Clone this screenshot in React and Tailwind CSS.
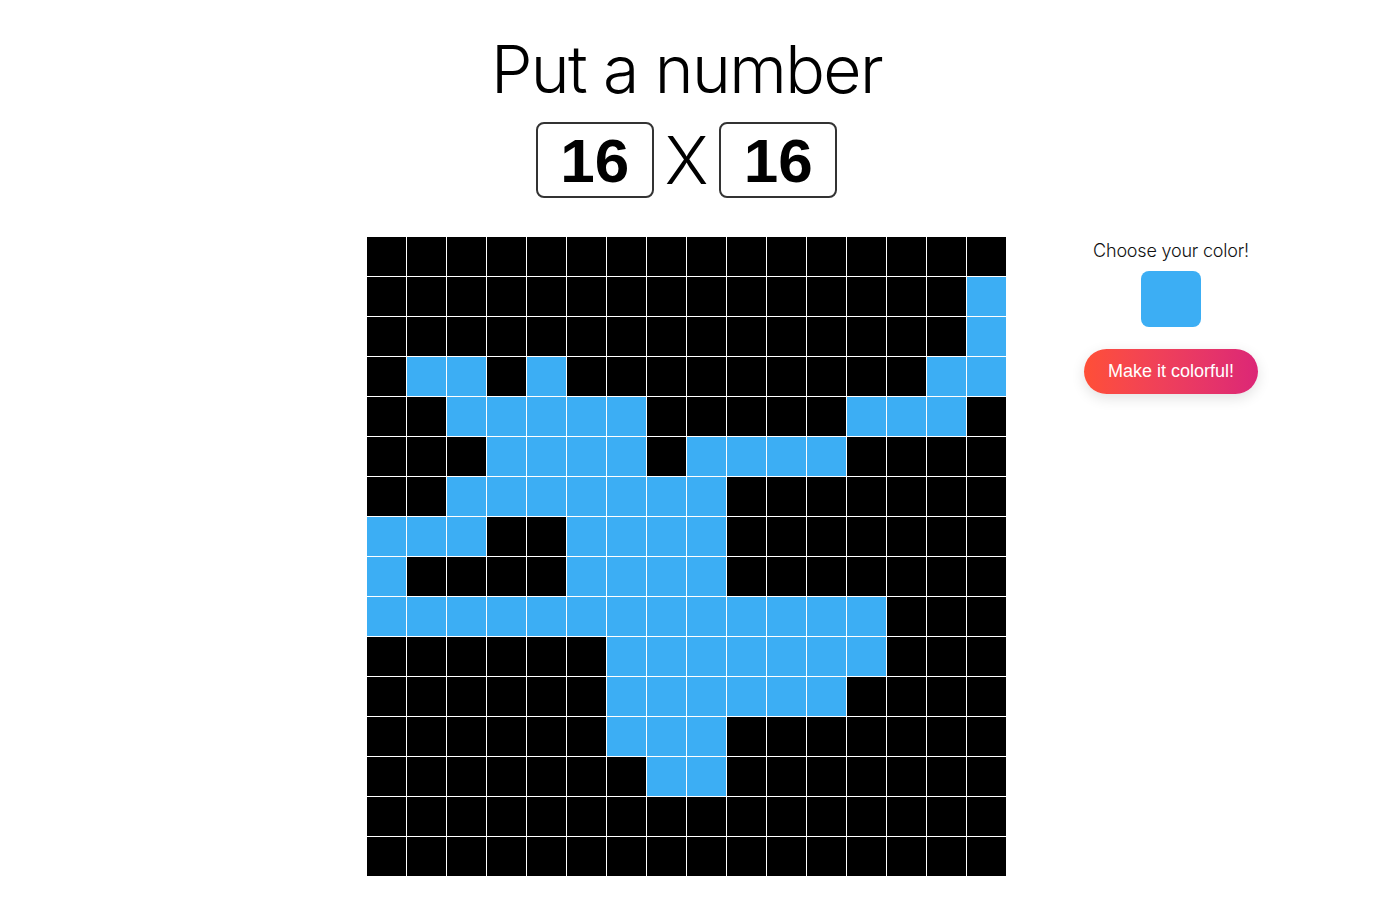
import React from "react";

const BLUE = [
  [],
  [15],
  [15],
  [1, 2, 4, 14, 15],
  [2, 3, 4, 5, 6, 12, 13, 14],
  [3, 4, 5, 6, 8, 9, 10, 11],
  [2, 3, 4, 5, 6, 7, 8],
  [0, 1, 2, 5, 6, 7, 8],
  [0, 5, 6, 7, 8],
  [0, 1, 2, 3, 4, 5, 6, 7, 8, 9, 10, 11, 12],
  [6, 7, 8, 9, 10, 11, 12],
  [6, 7, 8, 9, 10, 11],
  [6, 7, 8],
  [7, 8],
  [],
  [],
];

export default function App() {
  const cells = [];
  for (let r = 0; r < 16; r++) {
    for (let c = 0; c < 16; c++) {
      const blue = BLUE[r].includes(c);
      cells.push(
        <div
          key={r * 16 + c}
          className={blue ? "w-[39px] h-[39px] bg-[#3caef4]" : "w-[39px] h-[39px] bg-black"}
        />
      );
    }
  }

  return (
    <div className="w-[1373px] min-h-[907px] bg-white flex flex-col items-center" style={{ fontFamily: "Inter, 'Noto Sans', sans-serif" }}>
      <h1 className="mt-[36px] text-[66px] leading-none font-light text-black tracking-[-1.6px]">Put a number</h1>
      <div className="mt-[20px] flex items-center">
        <div className="w-[118px] h-[76px] border-2 border-[#333] rounded-lg flex items-center justify-center text-[62px] font-bold text-black" style={{ fontFamily: "'Liberation Sans', Arial, sans-serif" }}>16</div>
        <span className="mx-[11px] text-[66px] font-light leading-none text-black">X</span>
        <div className="w-[118px] h-[76px] border-2 border-[#333] rounded-lg flex items-center justify-center text-[62px] font-bold text-black" style={{ fontFamily: "'Liberation Sans', Arial, sans-serif" }}>16</div>
      </div>
      <div className="mt-[39px] w-full grid grid-cols-[1fr_auto_1fr] pb-[30px]">
        <div />
        <div className="grid grid-cols-[repeat(16,39px)] gap-px bg-white">{cells}</div>
        <div className="pl-[78px]">
          <div className="w-[174px] pt-[2px] flex flex-col items-center">
            <p className="text-[18px] leading-[24px] font-light text-[#111] whitespace-nowrap tracking-[-0.2px]">Choose your color!</p>
            <div className="mt-[8px] w-[60px] h-[56px] rounded-lg bg-[#3caef4]" />
            <button className="mt-[22px] w-[174px] h-[45px] rounded-full bg-gradient-to-r from-[#ff4f36] to-[#dc2676] text-white text-[18px] shadow-[0_4px_14px_rgba(0,0,0,0.12)]" style={{ fontFamily: "'Liberation Sans', Arial, sans-serif" }}>
              Make it colorful!
            </button>
          </div>
        </div>
      </div>
    </div>
  );
}
